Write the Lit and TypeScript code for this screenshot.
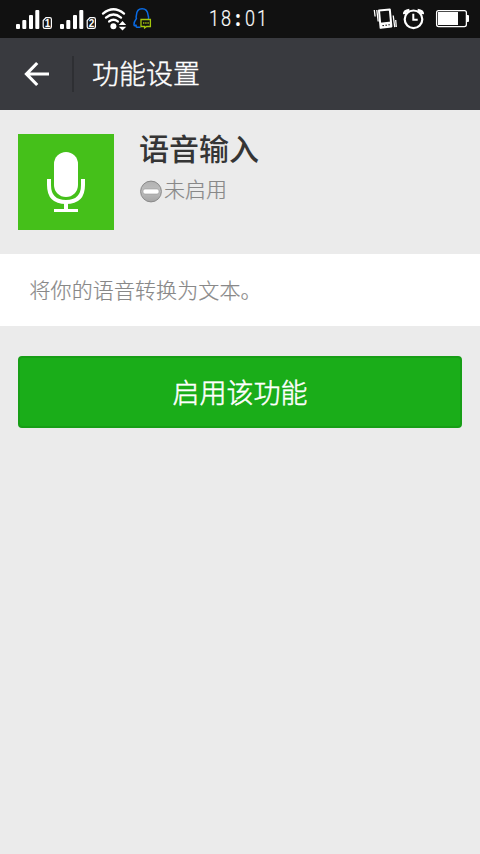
import { LitElement, html, css, svg } from "lit";
import { customElement, property } from "lit/decorators.js";

@customElement("status-bar")
class StatusBar extends LitElement {
  @property() time = "18:01";

  static styles = css`
    :host {
      display: flex;
      height: 38px;
      background: #111;
      color: #fff;
    }
    svg { display: block; flex: none; }
    .left { width: 208px; }
    .clock {
      display: flex;
      width: 152px;
      height: 38px;
      line-height: 37px;
      font-family: Roboto, "Liberation Sans", sans-serif;
      font-size: 22px;
      font-weight: 300;
    }
    .digit {
      width: 12.1px;
      display: flex;
      justify-content: center;
      transform: scaleX(0.82);
      -webkit-text-stroke: 0.2px #fff;
    }
    .colon { font-weight: 900; }
    .sim { font: 700 10px "Liberation Sans", sans-serif; }
  `;

  private signal(x: number, label: string) {
    return svg`
      <g fill="#fff">
        <rect x=${x} y="24" width="4" height="5" rx="1"/>
        <rect x=${x + 6.3} y="20" width="4" height="9" rx="1"/>
        <rect x=${x + 13} y="15" width="4" height="14" rx="1"/>
        <rect x=${x + 19.3} y="10" width="4" height="19" rx="1"/>
        <path d="M${x + 30} 17.6h3.8q1.6 0 1.6 1.6v7.6q0 1.6-1.6 1.6h-5q-1.6 0-1.6-1.6v-6.2z" fill="#111" stroke="#fff" stroke-width="1.2"/>
        <text class="sim" x=${x + 31.5} y="26.7" text-anchor="middle">${label}</text>
      </g>`;
  }

  render() {
    return html`
      <svg class="left" width="208" height="38" viewBox="0 0 208 38">
        ${this.signal(16, "1")} ${this.signal(60, "2")}
        <g fill="none" stroke="#fff" stroke-width="2.4" stroke-linecap="round">
          <path d="M103 13.6Q113.5 5 124 13.6"/>
          <path d="M106 17.6Q113.5 11.6 121 17.6"/>
          <path d="M109.2 21.4Q113.5 18 117.8 21.4"/>
        </g>
        <circle cx="113.4" cy="26.2" r="3" fill="#fff"/>
        <path d="M118.8 25l3.7-4 3.7 4zM118.8 26.8l3.7 3.8 3.7-3.8z" fill="#fff"/>
        <path d="M140.5 27.2h-3.6q-1.4-.2-.6-2.4-2 1.8-2.3 0-.2-2.8 2.4-6.3-.6-1.4 0-3.2.3-6.6 5.7-6.6t6 6.6q.9 1.8.3 4" fill="none" stroke="#0a6be4" stroke-width="1.5"/>
        <path d="M141 19.5h9.4v7h-3.8l-2 1.5v-1.5H141z" fill="#111" stroke="#a4c60c" stroke-width="1.3"/>
        <path d="M143 22.3h1.4v1.5H143zM145.2 22.3h1.4v1.5h-1.4zM147.4 22.3h1.4v1.5h-1.4z" fill="#a4c60c"/>
      </svg>
      <div class="clock">${[...this.time].map((c) => html`<span class="digit ${c === ":" ? "colon" : ""}">${c}</span>`)}</div>
      <svg width="120" height="38" viewBox="360 0 120 38">
        <g fill="none" stroke="#fff">
          <path d="M379 10.6l10.8-1.2 1.6 17-10.8 1.4z" stroke-width="2" stroke-linejoin="round"/>
          <path d="M380 22.8l11.2-1.2.5 5.2-11.2 1.4z" fill="#fff" stroke="none"/>
          <path d="M382.4 25.6h1.6M385.4 25.2h1.6M388.4 24.8h1.4" stroke="#111" stroke-width="1"/>
          <path d="M374.3 10l.8 6.5M376.8 10l1.4 11.5M393.2 15.5l1.5 11.7M395.7 20l.6 7" stroke-width="1.3"/>
          <circle cx="413.5" cy="19.3" r="8.8" stroke-width="2.2"/>
          <path d="M413.3 13.8v6h4.4" stroke-width="2"/>
          <path d="M404.4 14.2q-.2-3.4 5-4M417.6 10.2q5.2.6 5 4" stroke-width="3"/>
          <rect x="436.6" y="10.6" width="29.8" height="16" rx="2" stroke-width="1.3"/>
        </g>
        <path d="M438 12h20v13h-20zM467 15h1q1 0 1 1v5q0 1-1 1h-1z" fill="#fff"/>
      </svg>
    `;
  }
}

@customElement("app-root")
class AppRoot extends LitElement {
  static styles = css`
    :host {
      display: flex;
      flex-direction: column;
      height: 854px;
      background: #ebebeb;
      overflow: hidden;
      font-family: "Noto Sans CJK SC", sans-serif;
      font-weight: 300;
    }
    svg { display: block; flex: none; }
    .bar {
      display: flex;
      align-items: center;
      height: 72px;
      flex: none;
      box-sizing: border-box;
      padding-left: 24px;
      background: #393a3f;
      color: #fff;
    }
    .divider {
      width: 2px;
      height: 36px;
      margin: 0 18px 0 23px;
      background: #2e2f33;
    }
    .title {
      font-size: 27px;
      line-height: 36px;
      padding-bottom: 3px;
      -webkit-text-stroke: 0.4px #fff;
    }
    .feature {
      display: flex;
      height: 144px;
      flex: none;
      box-sizing: border-box;
      padding: 24px 18px;
      gap: 25px;
    }
    .tile { width: 96px; height: 96px; background: #45c01a; }
    .info { display: flex; flex-direction: column; }
    .name {
      font-size: 30px;
      line-height: 27px;
      font-weight: 500;
      color: #353535;
    }
    .status {
      display: flex;
      align-items: center;
      height: 24px;
      margin-top: 16px;
      font-size: 21px;
      line-height: 24px;
      color: #888;
    }
    .status svg { margin: 4px 2px 0 0; }
    .status span { padding-bottom: 3px; -webkit-text-stroke: 0.2px #888; }
    .desc {
      height: 72px;
      flex: none;
      box-sizing: border-box;
      padding-left: 29.5px;
      background: #fff;
      color: #888;
      font-size: 21px;
      letter-spacing: 0.1px;
      line-height: 70px;
      -webkit-text-stroke: 0.2px #888;
    }
    .enable {
      height: 72px;
      flex: none;
      margin: 30px 18px 0;
      padding: 0;
      border: 2px solid #179e16;
      border-radius: 4px;
      background: #1aad19;
      color: #fff;
      font: 300 27px/66px "Noto Sans CJK SC", sans-serif;
      -webkit-text-stroke: 0.5px #fff;
      text-align: center;
    }
  `;

  render() {
    return html`
      <status-bar></status-bar>
      <header class="bar">
        <svg width="25" height="26" viewBox="0 0 25 26">
          <path d="M13.2 2L2.5 13l10.7 11M2.5 13H25" fill="none" stroke="#fff" stroke-width="3.2"/>
        </svg>
        <div class="divider"></div>
        <div class="title">功能设置</div>
      </header>
      <section class="feature">
        <svg class="tile" viewBox="0 0 96 96">
          <rect x="36" y="18" width="24" height="45" rx="12" fill="#fff"/>
          <path d="M31 45v6q0 17 17 17t17-17v-6" fill="none" stroke="#fff" stroke-width="4"/>
          <path d="M46 68h4v7h10v3H36v-3h10z" fill="#fff"/>
        </svg>
        <div class="info">
          <div class="name">语音输入</div>
          <div class="status">
            <svg width="23" height="23" viewBox="0 0 23 23">
              <defs>
                <linearGradient id="disc" x2="0" y2="1">
                  <stop offset="0" stop-color="#b2b2b2"/>
                  <stop offset=".5" stop-color="#bdbdbd"/>
                  <stop offset="1" stop-color="#a4a4a4"/>
                </linearGradient>
              </defs>
              <circle cx="12" cy="11.5" r="10.4" fill="url(#disc)" stroke="#888"/>
              <rect x="4" y="9" width="16" height="5" rx="2" fill="#fff" stroke="#999" stroke-width=".6"/>
            </svg>
            <span>未启用</span>
          </div>
        </div>
      </section>
      <div class="desc">将你的语音转换为文本。</div>
      <button class="enable">启用该功能</button>
    `;
  }
}
